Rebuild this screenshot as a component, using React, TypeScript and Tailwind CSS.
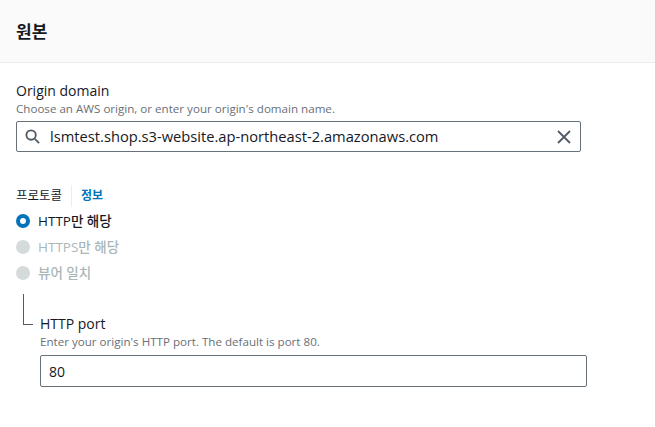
import React from "react";

const font = { fontFamily: '"Open Sans", "Noto Sans CJK KR", sans-serif' };

function Radio({ label, checked, disabled }: { label: string; checked?: boolean; disabled?: boolean }) {
  return (
    <div className="flex items-center h-[26px]">
      {checked ? (
        <span className="w-[14px] h-[14px] rounded-full border-[4px] border-[#0073bb] bg-white box-border" />
      ) : (
        <span className="w-[14px] h-[14px] rounded-full bg-[#d5dbdb]" />
      )}
      <span
        className={`ml-[8px] text-[13.5px] font-medium ${disabled ? "text-[#aab7b8]" : "text-[#16191f]"}`}
      >
        {label}
      </span>
    </div>
  );
}

export default function App() {
  return (
    <div className="w-[655px] h-[427px] bg-white overflow-hidden" style={font}>
      <div className="h-[63px] bg-[#fafafa] border-b border-[#eaeded] flex items-center px-4">
        <h2 className="text-[17px] font-bold text-[#16191f] leading-none">원본</h2>
      </div>
      <div className="px-4 pt-[18px]">
        <div className="text-[14px] text-[#16191f] leading-[20px]">Origin domain</div>
        <div className="text-[11.6px] text-[#687078] leading-[16px]">
          Choose an AWS origin, or enter your origin's domain name.
        </div>
        <div className="mt-[4px] w-[565px] h-[31px] border border-[#687078] rounded-[2px] flex items-center pl-[8px] pr-[8px]">
          <svg width="15" height="15" viewBox="0 0 16 16" fill="none" stroke="#545b64" strokeWidth="2">
            <circle cx="6.5" cy="6.5" r="5" />
            <path d="M10.5 10.5L15 15" />
          </svg>
          <span className="ml-[10px] text-[14.7px] text-[#16191f] flex-1">
            lsmtest.shop.s3-website.ap-northeast-2.amazonaws.com
          </span>
          <svg width="14" height="14" viewBox="0 0 14 14" fill="none" stroke="#545b64" strokeWidth="1.8" className="mr-[1px]">
            <path d="M1 1L13 13M13 1L1 13" />
          </svg>
        </div>
        <div className="mt-[33px] flex items-center h-[22px]">
          <span className="text-[12.5px] text-[#16191f]">프로토콜</span>
          <span className="mx-[9px] w-px h-[22px] bg-[#eaeded]" />
          <span className="text-[12px] font-bold text-[#0073bb]">정보</span>
        </div>
        <div className="mt-[1px]">
          <Radio label="HTTP만 해당" checked />
          <Radio label="HTTPS만 해당" disabled />
          <Radio label="뷰어 일치" disabled />
        </div>
        <div className="flex mt-[8px]">
          <div className="ml-[7px] w-[10px] h-[31px] border-l border-b border-[#545b64]" />
          <div className="ml-[7px] mt-[20px]">
            <div className="text-[14px] text-[#16191f] leading-[20px] font-medium">HTTP port</div>
            <div className="text-[11.6px] text-[#687078] leading-[16px]">
              Enter your origin's HTTP port. The default is port 80.
            </div>
            <div className="mt-[5px] w-[547px] h-[32px] border border-[#687078] rounded-[2px] flex items-center px-[8px]">
              <span className="text-[14px] text-[#16191f]">80</span>
            </div>
          </div>
        </div>
      </div>
    </div>
  );
}
